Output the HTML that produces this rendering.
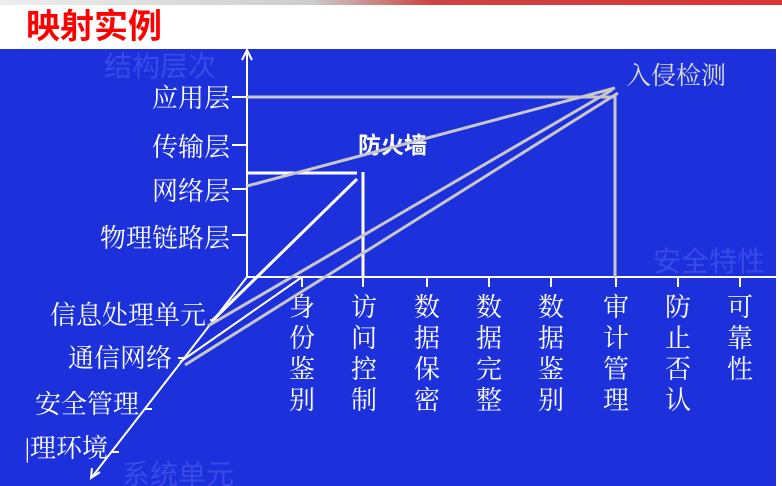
<!DOCTYPE html>
<html><head><meta charset="utf-8"><style>
html,body{margin:0;padding:0;width:782px;height:486px;overflow:hidden;background:#fff}
svg{display:block}
</style></head><body>
<svg width="782" height="486" xmlns="http://www.w3.org/2000/svg" font-family="'Liberation Sans','Noto Sans CJK SC',sans-serif">
<defs><linearGradient id="g" x1="0" x2="1"><stop offset="0" stop-color="#eee"/><stop offset="0.4" stop-color="#ccc"/><stop offset="0.55" stop-color="#c44"/><stop offset="1" stop-color="#d33"/></linearGradient></defs>
<rect x="0" y="0" width="782" height="5" fill="url(#g)"/>
<text x="26" y="38" font-size="34" font-weight="bold" fill="#f00">映射实例</text>
<rect x="0" y="49" width="776" height="437" fill="#1c30dc"/>
<g fill="#3a4ae6" font-size="28">
<text x="104" y="76">结构层次</text>
<text x="653" y="271">安全特性</text>
<text x="122" y="484">系统单元</text>
</g>
<g fill="#fff" font-size="26" font-family="'Liberation Serif','Noto Serif CJK SC',serif">
<text x="230" y="107" text-anchor="end">应用层</text>
<text x="230" y="156" text-anchor="end">传输层</text>
<text x="230" y="200" text-anchor="end">网络层</text>
<text x="230" y="247" text-anchor="end">物理链路层</text>
<text x="206" y="324" text-anchor="end">信息处理单元</text>
<text x="172" y="367" text-anchor="end">通信网络</text>
<text x="139" y="413" text-anchor="end">安全管理</text>
<text x="108" y="457" text-anchor="end">|理环境</text>
</g>
<text x="358" y="153" fill="#fff" font-weight="bold" font-size="23">防火墙</text>
<text x="626" y="84" fill="#ddd" font-size="25" font-family="'Liberation Serif','Noto Serif CJK SC',serif">入侵检测</text>
<g fill="#fff" font-size="26" text-anchor="middle" font-family="'Liberation Serif','Noto Serif CJK SC',serif">
<text x="302" y="316">身<tspan x="302" dy="31">份</tspan><tspan x="302" dy="31">鉴</tspan><tspan x="302" dy="31">别</tspan></text>
<text x="364" y="316">访<tspan x="364" dy="31">问</tspan><tspan x="364" dy="31">控</tspan><tspan x="364" dy="31">制</tspan></text>
<text x="427" y="316">数<tspan x="427" dy="31">据</tspan><tspan x="427" dy="31">保</tspan><tspan x="427" dy="31">密</tspan></text>
<text x="489" y="316">数<tspan x="489" dy="31">据</tspan><tspan x="489" dy="31">完</tspan><tspan x="489" dy="31">整</tspan></text>
<text x="551" y="316">数<tspan x="551" dy="31">据</tspan><tspan x="551" dy="31">鉴</tspan><tspan x="551" dy="31">别</tspan></text>
<text x="616" y="316">审<tspan x="616" dy="31">计</tspan><tspan x="616" dy="31">管</tspan><tspan x="616" dy="31">理</tspan></text>
<text x="678" y="316">防<tspan x="678" dy="31">止</tspan><tspan x="678" dy="31">否</tspan><tspan x="678" dy="31">认</tspan></text>
<text x="740" y="316">可<tspan x="740" dy="31">靠</tspan><tspan x="740" dy="31">性</tspan></text>
</g>
<g stroke="#fff" stroke-width="2" fill="none">
<path d="M247 277V52M242 60L247 50L252 60"/>
<path d="M247 277H776"/>
<path d="M232 97H247M232 145H247M232 189H247M232 235H247"/>
<path d="M302 277V287M363 277V287M427 277V287M489 277V287M551 277V287M616 277V287M678 277V287M740 277V287"/>
<path d="M247 173H357M363 172V277" stroke-width="3"/>
<path d="M357 179L213 320" stroke-width="3"/>
<path d="M247 277L92 477M92 468L91 478L100 472"/>
<path d="M302 277L180 362"/>
<path d="M210 320H218M178 358H186M145 409H152M112 452H119"/>
</g>
<g stroke="#c8c8c8" stroke-width="3" fill="none">
<path d="M247 97H615V277"/>
<path d="M247 186L615 88"/>
<path d="M208 326L612 90"/>
<path d="M185 365L618 93"/>
</g>
</svg>
</body></html>
